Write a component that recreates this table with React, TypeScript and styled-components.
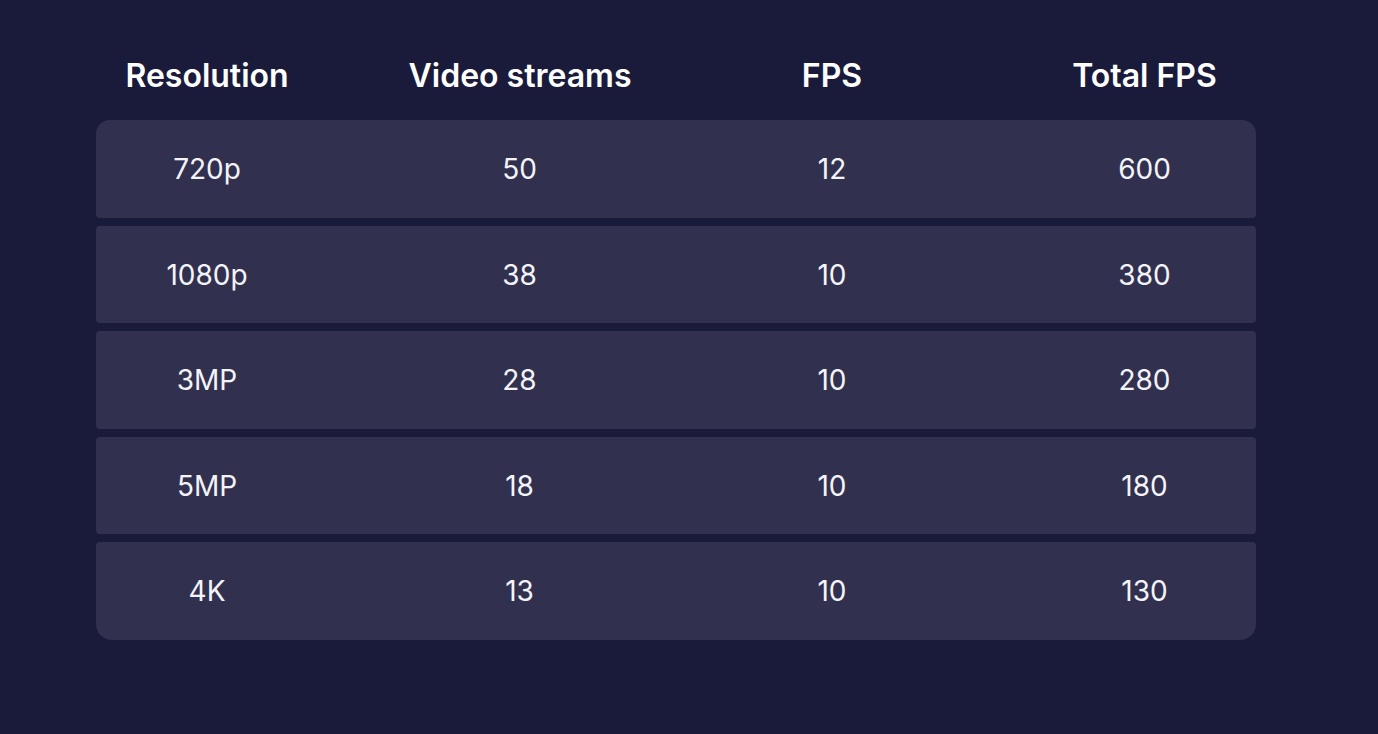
import styled, { createGlobalStyle } from "styled-components"

const GlobalStyle = createGlobalStyle`
  html, body {
    margin: 0;
    padding: 0;
    background: #1a1b3b;
  }
  body {
    font-family: Inter, "Noto Sans", sans-serif;
    color: #ffffff;
  }
`

const Page = styled.main`
  width: 1378px;
  height: 734px;
  box-sizing: border-box;
  padding: 49px 0 0 96px;
  background: #1a1b3b;
`

const Table = styled.div`
  width: 1160px;
  display: flex;
  flex-direction: column;
  gap: 8px;
`

const Columns = styled.div`
  display: grid;
  grid-template-columns: repeat(4, 222px);
  column-gap: 90.5px;
  align-items: center;
`

const HeaderRow = styled(Columns)`
  height: 52px;
  margin-bottom: 11px;
`

const HeaderCell = styled.div`
  text-align: center;
  font-size: 32px;
  font-weight: 600;
  white-space: nowrap;
`

const Row = styled(Columns)<{ $first?: boolean; $last?: boolean }>`
  height: 97.5px;
  background: #31314f;
  border-radius: ${p => (p.$first ? "14px 14px 4px 4px" : p.$last ? "4px 4px 16px 16px" : "4px")};
`

const Cell = styled.div`
  text-align: center;
  font-size: 28px;
  font-weight: 400;
  color: #f4f4f8;
  white-space: nowrap;
  padding-top: 1px;
`

const headers = ["Resolution", "Video streams", "FPS", "Total FPS"]

const rows = [
  ["720p", "50", "12", "600"],
  ["1080p", "38", "10", "380"],
  ["3MP", "28", "10", "280"],
  ["5MP", "18", "10", "180"],
  ["4K", "13", "10", "130"],
]

export default function App() {
  return (
    <Page>
      <GlobalStyle />
      <Table>
        <HeaderRow>
          {headers.map(h => (
            <HeaderCell key={h}>{h}</HeaderCell>
          ))}
        </HeaderRow>
        {rows.map((r, i) => (
          <Row key={r[0]} $first={i === 0} $last={i === rows.length - 1}>
            {r.map((c, j) => (
              <Cell key={j}>{c}</Cell>
            ))}
          </Row>
        ))}
      </Table>
    </Page>
  )
}
